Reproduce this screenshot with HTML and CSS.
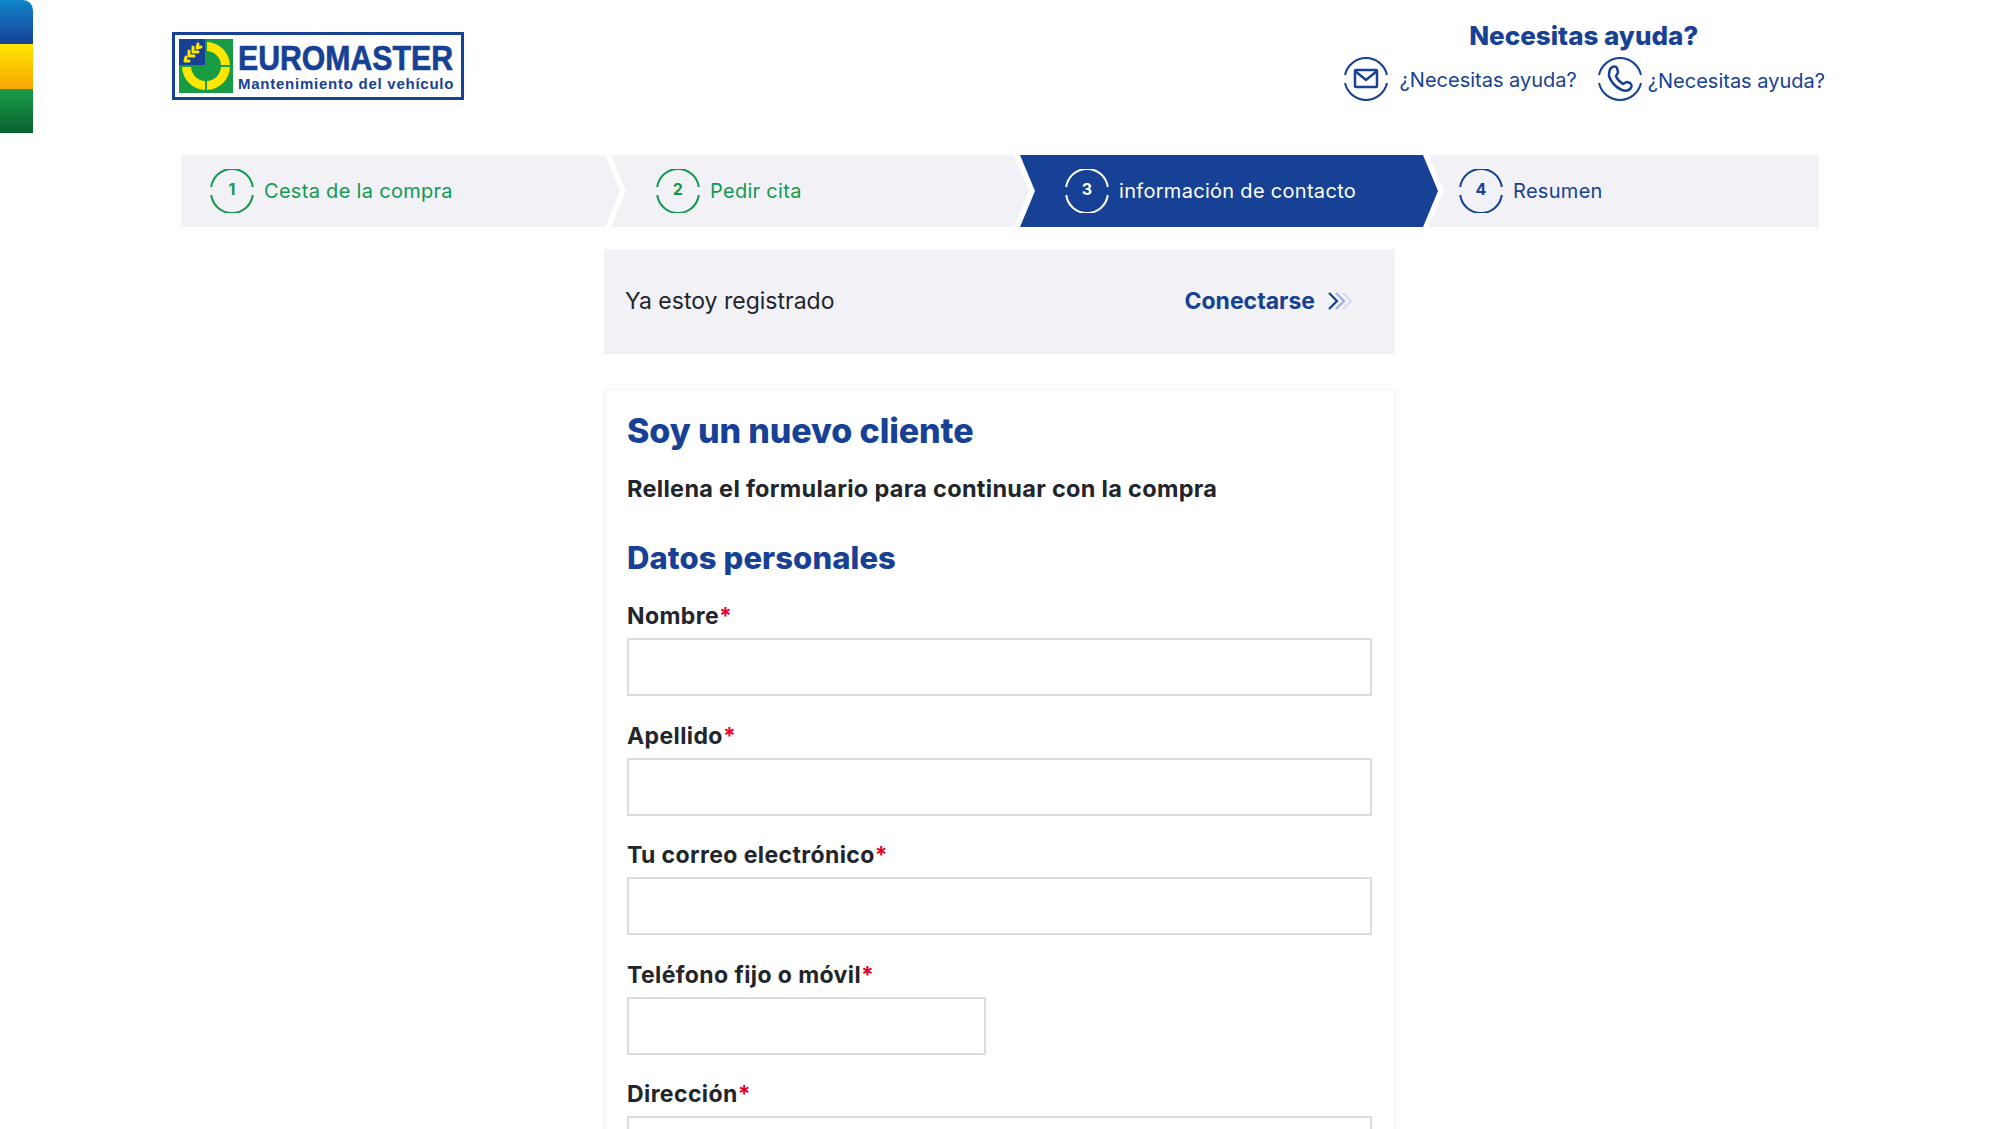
FILE: index.html
```html
<!DOCTYPE html>
<html lang="es">
<head>
  <meta charset="UTF-8">
  <title>Información de contacto</title>
  <link rel="stylesheet" href="styles.css">
</head>
<body>
  <!-- pestana de colores -->
  <div class="side-tab">
    <span class="tab-blue"></span>
    <span class="tab-yellow"></span>
    <span class="tab-green"></span>
  </div>

  <header class="top">
    <svg class="logo" width="292" height="68" viewBox="0 0 292 68">
      <rect x="1.5" y="1.5" width="289" height="65" fill="#fff" stroke="#164194" stroke-width="3"/>
      <rect x="7" y="7" width="54" height="54" fill="#179c45"/>
      <rect x="7" y="7" width="26" height="26" fill="#164194"/>
      <path d="M35 10A24 24 0 0 1 58 33H49A15 15 0 0 0 35 19Z" fill="#ffe600"/>
      <path d="M58 35A24 24 0 0 1 35 58V49A15 15 0 0 0 49 35Z" fill="#ffe600"/>
      <path d="M33 58A24 24 0 0 1 10 35H19A15 15 0 0 0 33 49Z" fill="#ffe600"/>
      <!-- espiga -->
      <path d="M12 30L28 13" stroke="#164194" stroke-width="1" fill="none"/>
      <path d="M13 29l1-4M13 29l4 0M17 24l0-5M17 24l5 0M21 20l0-5M21 20l5 0M25 16l1-4M25 16l4-1" stroke="#ffe600" stroke-width="3" stroke-linecap="round" fill="none"/>
      <text class="logo-name" transform="translate(66 38) scale(.84 1)">EUROMASTER</text>
      <text class="logo-sub" x="66" y="56.5">Mantenimiento del vehículo</text>
    </svg>

    <div class="help">
      <h3 class="help-title">Necesitas ayuda?</h3>
      <div class="help-links">
        <a class="help-link">
          <svg width="46" height="46" viewBox="0 0 46 46" fill="none" stroke="#164194" stroke-width="2">
            <path d="M2 19A21.5 21.5 0 0 1 44 19M44 27A21.5 21.5 0 0 1 2 27"/>
            <rect x="12" y="14" width="22" height="17" rx="1" stroke-width="2.5"/>
            <path d="M12 15L23 24L34 15" stroke-width="2.5"/>
          </svg>
          <span>¿Necesitas ayuda?</span>
        </a>
        <a class="help-link help-phone">
          <svg width="46" height="46" viewBox="0 0 46 46" fill="none" stroke="#164194" stroke-width="2">
            <path d="M2 19A21.5 21.5 0 0 1 44 19M44 27A21.5 21.5 0 0 1 2 27"/>
            <path d="M14 12c2-2 5-2 6 0l1 4c0 2-2 3-2 4c1 3 4 6 7 8c1 0 2-2 4-2l3 1c2 1 2 4 0 6c-2 2-5 2-8 1c-7-3-11-8-13-14c0-3 0-6 2-8Z" stroke-width="2.5"/>
          </svg>
          <span>¿Necesitas ayuda?</span>
        </a>
      </div>
    </div>
  </header>

  <!-- pasos de la compra -->
  <nav class="steps">
    <div class="step step-first done">
      <svg class="step-ring" width="44" height="44" viewBox="0 0 44 44"><path d="M1.2 18A21 21 0 0 1 42.8 18M42.8 26A21 21 0 0 1 1.2 26"/></svg>
      <b class="step-num">1</b>
      <span>Cesta de la compra</span>
    </div>
    <div class="step step-second done">
      <svg class="step-ring" width="44" height="44" viewBox="0 0 44 44"><path d="M1.2 18A21 21 0 0 1 42.8 18M42.8 26A21 21 0 0 1 1.2 26"/></svg>
      <b class="step-num">2</b>
      <span>Pedir cita</span>
    </div>
    <div class="step step-third active">
      <svg class="step-ring" width="44" height="44" viewBox="0 0 44 44"><path d="M1.2 18A21 21 0 0 1 42.8 18M42.8 26A21 21 0 0 1 1.2 26"/></svg>
      <b class="step-num">3</b>
      <span>información de contacto</span>
    </div>
    <div class="step step-last">
      <svg class="step-ring" width="44" height="44" viewBox="0 0 44 44"><path d="M1.2 18A21 21 0 0 1 42.8 18M42.8 26A21 21 0 0 1 1.2 26"/></svg>
      <b class="step-num">4</b>
      <span>Resumen</span>
    </div>
  </nav>

  <main class="content">
    <div class="login-bar">
      <span class="login-text">Ya estoy registrado</span>
      <a class="login-link">
        Conectarse
        <svg width="25" height="20" viewBox="0 0 25 20" fill="none" stroke-width="2.2">
          <path d="M15 2L23 10L15 18" stroke="#d5dded"/>
          <path d="M8 2L16 10L8 18" stroke="#9db1d8"/>
          <path d="M1 2L9 10L1 18" stroke="#164194"/>
        </svg>
      </a>
    </div>

    <form class="card">
      <h1>Soy un nuevo cliente</h1>
      <p class="intro">Rellena el formulario para continuar con la compra</p>
      <h2>Datos personales</h2>

      <div class="field">
        <label>Nombre<i>*</i></label>
        <input type="text">
      </div>
      <div class="field">
        <label>Apellido<i>*</i></label>
        <input type="text">
      </div>
      <div class="field">
        <label>Tu correo electrónico<i>*</i></label>
        <input type="text">
      </div>
      <div class="field">
        <label>Teléfono fijo o móvil<i>*</i></label>
        <input type="text" class="short">
      </div>
      <div class="field">
        <label>Dirección<i>*</i></label>
        <input type="text">
      </div>
    </form>
  </main>
</body>
</html>
```

FILE: styles.css
```css
* {
  box-sizing: border-box;
}

html, body {
  height: 1129px;
  overflow: hidden;
}

body {
  margin: 0;
  background: #fff;
  color: #22252b;
  font-family: "Inter", "Noto Sans", sans-serif;
}

/* pestana lateral */
.side-tab {
  position: absolute;
  top: 0;
  left: 0;
  width: 33px;
  height: 133px;
  display: flex;
  flex-direction: column;
  border-top-right-radius: 10px;
  overflow: hidden;
}

.side-tab span {
  flex: 1;
}

.tab-blue {
  background: linear-gradient(#0f85c9, #164194);
}

.tab-yellow {
  background: linear-gradient(#ffe600, #f7a600);
}

.tab-green {
  background: linear-gradient(#179c45, #0a6431);
}

/* cabecera */
.top {
  height: 155px;
  padding: 20px 174px 0 172px;
  display: flex;
  justify-content: space-between;
  align-items: flex-start;
}

.logo {
  margin-top: 12px;
}

.logo-name {
  font: 700 36px "Liberation Sans", sans-serif;
  fill: #164194;
  stroke: #164194;
  stroke-width: .7px;
}

.logo-sub {
  font: 700 15px "Liberation Sans", sans-serif;
  letter-spacing: .75px;
  fill: #164194;
}

.help {
  display: flex;
  flex-direction: column;
  align-items: center;
}

.help-title {
  margin: 0;
  font-size: 26px;
  line-height: 32px;
  font-weight: 800;
  color: #164194;
}

.help-links {
  display: flex;
  gap: 20px;
  margin-top: 4px;
}

.help-link {
  display: flex;
  align-items: center;
  gap: 11px;
  color: #164194;
  font-size: 20px;
}

.help-link span {
  margin-top: 2px;
}

.help-phone {
  gap: 5px;
}

.help-phone span {
  margin-top: 4px;
}

/* pasos */
.steps {
  display: flex;
  height: 72px;
  margin: 0 180px 0 181px;
}

.step {
  position: relative;
  display: flex;
  align-items: center;
  gap: 10px;
  padding-left: 45px;
  margin-left: -9px;
  background: #f1f1f6;
  color: #164194;
  font-size: 20px;
  letter-spacing: .3px;
  clip-path: polygon(0 0, calc(100% - 15px) 0, 100% 50%, calc(100% - 15px) 100%, 0 100%, 15px 50%);
}

.step-first {
  width: 439px;
  margin-left: 0;
  padding-left: 29px;
  clip-path: polygon(0 0, calc(100% - 15px) 0, 100% 50%, calc(100% - 15px) 100%, 0 100%);
}

.step-second,
.step-third {
  width: 418px;
}

.step-last {
  flex: 1;
  padding-left: 30px;
  clip-path: polygon(0 0, 100% 0, 100% 100%, 0 100%, 15px 50%);
}

.step-ring {
  fill: none;
  stroke: currentColor;
  stroke-width: 2;
  flex: none;
}

.step-num {
  position: absolute;
  width: 44px;
  text-align: center;
  font-size: 16px;
  font-weight: 700;
  margin-top: -5px;
}

.step.done {
  color: #129a50;
}

.step.active {
  background: #164194;
  color: #fff;
}

/* zona central */
.content {
  width: 791px;
  margin: 22px auto 0;
}

.login-bar {
  height: 105px;
  padding: 0 42px 2px 21px;
  display: flex;
  justify-content: space-between;
  align-items: center;
  background: #f1f1f6;
}

.login-text {
  font-size: 23px;
}

.login-link {
  display: flex;
  align-items: center;
  gap: 13px;
  color: #164194;
  font-size: 23px;
  font-weight: 700;
}

.card {
  margin-top: 35px;
  padding: 19px 22px 0;
  border: 1px solid #f2f2f2;
  height: 900px;
}

h1 {
  margin: 0;
  font-size: 34px;
  line-height: 44px;
  font-weight: 800;
  letter-spacing: -.1px;
  color: #164194;
}

.intro {
  margin: 20px 0 0;
  font-size: 23.5px;
  line-height: 32px;
  font-weight: 700;
  letter-spacing: .3px;
}

h2 {
  margin: 32px 0 0;
  font-size: 31px;
  line-height: 42px;
  font-weight: 800;
  letter-spacing: .1px;
  color: #164194;
}

.field {
  margin-bottom: 24.5px;
}

.field:first-of-type {
  margin-top: 22px;
}

label {
  display: block;
  font-size: 23px;
  line-height: 30px;
  letter-spacing: .4px;
  margin-bottom: 7px;
  font-weight: 700;
}

label i {
  color: #e4002b;
  font-style: normal;
}

input {
  display: block;
  width: 100%;
  height: 58px;
  border: 2px solid #d9dce3;
  background: #fff;
  outline: none;
}

input.short {
  width: 359px;
}
```
